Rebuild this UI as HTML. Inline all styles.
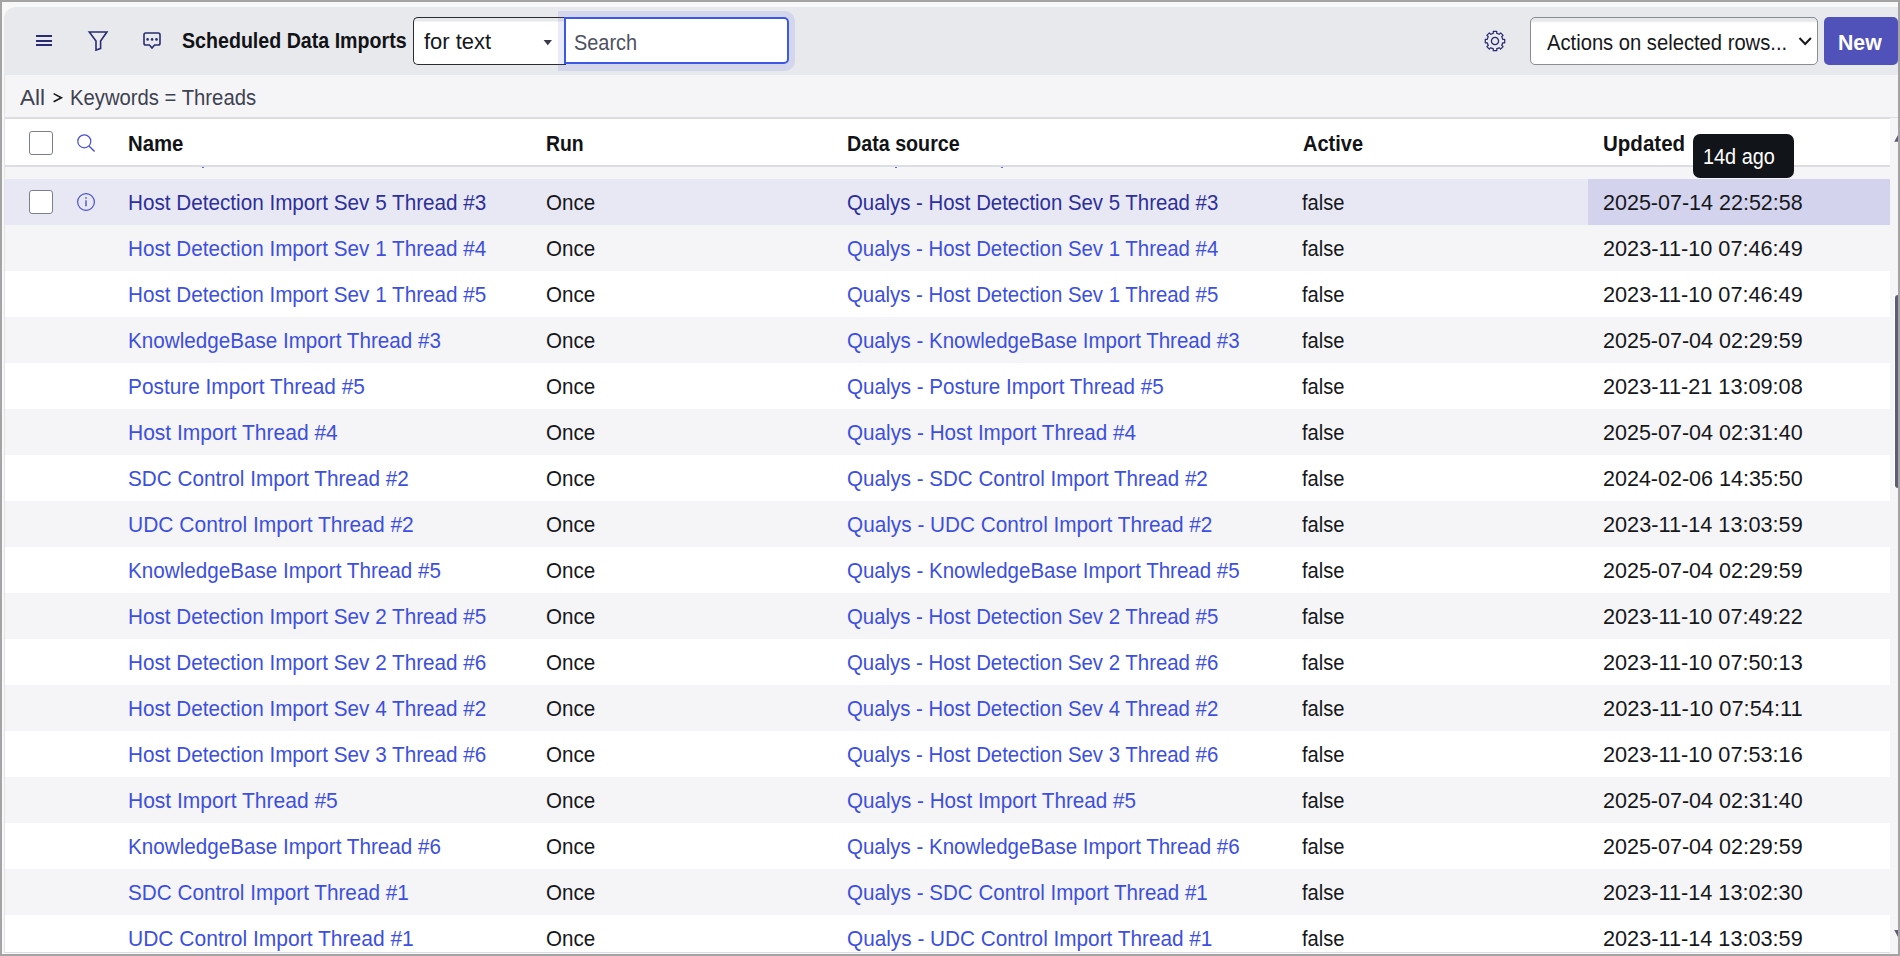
<!DOCTYPE html><html><head><meta charset="utf-8"><style>
*{box-sizing:border-box;margin:0;padding:0}
html,body{width:1900px;height:956px;overflow:hidden;background:#a4a4a4;font-family:"Liberation Sans",sans-serif}
.a{position:absolute}
.t{position:absolute;white-space:pre;line-height:30px;height:30px;transform-origin:0 0}
.cb{position:absolute;width:24px;height:24px;border:1.5px solid #7b8090;border-radius:3px;background:#fff}
</style></head><body>
<div class="a" style="left:2px;top:2px;width:1896px;height:952px;background:#f8f8f8"></div>
<div class="a" style="left:4px;top:7px;width:1894px;height:68px;background:#e8e9ed;border-top-left-radius:12px"></div>
<div class="a" style="left:4px;top:75px;width:1894px;height:44px;background:#f5f5f7;border-bottom:2px solid #dcdde3"></div>
<div class="a" style="left:4px;top:119px;width:1886px;height:48px;background:#fff;border-bottom:2px solid #dcdde3"></div>
<div class="a" style="left:4px;top:167px;width:1886px;height:785px;background:#f5f5f7"></div>
<div class="a" style="left:4px;top:179px;width:1886px;height:46px;background:#e8e8f4"></div>
<div class="a" style="left:4px;top:225px;width:1886px;height:46px;background:#f5f5f7"></div>
<div class="a" style="left:4px;top:271px;width:1886px;height:46px;background:#ffffff"></div>
<div class="a" style="left:4px;top:317px;width:1886px;height:46px;background:#f5f5f7"></div>
<div class="a" style="left:4px;top:363px;width:1886px;height:46px;background:#ffffff"></div>
<div class="a" style="left:4px;top:409px;width:1886px;height:46px;background:#f5f5f7"></div>
<div class="a" style="left:4px;top:455px;width:1886px;height:46px;background:#ffffff"></div>
<div class="a" style="left:4px;top:501px;width:1886px;height:46px;background:#f5f5f7"></div>
<div class="a" style="left:4px;top:547px;width:1886px;height:46px;background:#ffffff"></div>
<div class="a" style="left:4px;top:593px;width:1886px;height:46px;background:#f5f5f7"></div>
<div class="a" style="left:4px;top:639px;width:1886px;height:46px;background:#ffffff"></div>
<div class="a" style="left:4px;top:685px;width:1886px;height:46px;background:#f5f5f7"></div>
<div class="a" style="left:4px;top:731px;width:1886px;height:46px;background:#ffffff"></div>
<div class="a" style="left:4px;top:777px;width:1886px;height:46px;background:#f5f5f7"></div>
<div class="a" style="left:4px;top:823px;width:1886px;height:46px;background:#ffffff"></div>
<div class="a" style="left:4px;top:869px;width:1886px;height:46px;background:#f5f5f7"></div>
<div class="a" style="left:4px;top:915px;width:1886px;height:37px;background:#ffffff"></div>
<div class="a" style="left:1588px;top:179px;width:302px;height:46px;background:#d3d3ee"></div>
<div class="a" style="left:4px;top:75px;width:1px;height:877px;background:#e4e4e8"></div>
<div class="a" style="left:4px;top:952px;width:1894px;height:1px;background:#dcdce6"></div>
<div class="a" style="left:202px;top:167px;width:2px;height:1px;background:#5a6ae6"></div>
<div class="a" style="left:895px;top:167px;width:2px;height:1px;background:#5a6ae6"></div>
<div class="a" style="left:1001px;top:167px;width:2px;height:1px;background:#5a6ae6"></div>
<div class="a" style="left:1890px;top:118px;width:8px;height:836px;background:#f5f5f7"></div>
<svg class="a" style="left:1890px;top:120px" width="8" height="830" viewBox="1890 120 8 830"><path d="M1898 135 L1894.2 141.7 L1898 141.7 Z" fill="#5e5d77"/><path d="M1894.2 930 L1898 930 L1898 937 Z" fill="#5e5d77"/></svg>
<div class="a" style="left:1894px;top:295px;width:1px;height:193px;background:#fff"></div>
<div class="a" style="left:1895px;top:295px;width:3px;height:193px;background:#5e5d77;border-radius:3px 0 0 3px"></div>
<svg class="a" style="left:50px;top:90px" width="16" height="16" viewBox="50 90 16 16"><path d="M53.6 93.6 L61.4 97.7 L53.6 101.8" fill="none" stroke="#16171a" stroke-width="1.6" stroke-linejoin="miter"/></svg>
<div class="a" style="left:36px;top:35.1px;width:16px;height:1.8px;background:#2a2b72"></div>
<div class="a" style="left:36px;top:40.1px;width:16px;height:1.8px;background:#2a2b72"></div>
<div class="a" style="left:36px;top:44.1px;width:16px;height:1.8px;background:#2a2b72"></div>
<svg class="a" style="left:84px;top:27px" width="28" height="28" viewBox="84 27 28 28"><path d="M89.3 32 H106.9 L100.6 41 V48.4 L96 50 V41 Z" fill="none" stroke="#2a2b72" stroke-width="1.6" stroke-linejoin="miter"/></svg>
<svg class="a" style="left:140px;top:28px" width="24" height="24" viewBox="140 28 24 24"><path d="M145.8 33 H158.2 Q160 33 160 34.8 V43.2 Q160 45 158.2 45 H154.6 L152 48 L149.4 45 H145.8 Q144 45 144 43.2 V34.8 Q144 33 145.8 33 Z" fill="none" stroke="#2a2b72" stroke-width="1.6"/><circle cx="147.6" cy="39.4" r="1.3" fill="#2a2b72"/><circle cx="152.1" cy="39.4" r="1.3" fill="#2a2b72"/><circle cx="156.5" cy="39.4" r="1.3" fill="#2a2b72"/></svg>
<div class="a" style="left:413px;top:17px;width:153px;height:47.5px;background:linear-gradient(#e7e8e9 0,#e7e8e9 3px,#fff 4px);border:1px solid #2b2b30;border-right:none;border-radius:5px 0 0 5px"></div>
<svg class="a" style="left:540px;top:36px" width="16" height="12" viewBox="0 0 16 12"><path d="M3.6 4 L12 4 L7.8 9.2 Z" fill="#3a3b4a"/></svg>
<div class="a" style="left:558px;top:11px;width:237px;height:60px;background:rgba(70,90,220,0.12);border-radius:0 10px 10px 0"></div>
<div class="a" style="left:564px;top:17px;width:225px;height:47px;background:#fff;border:2px solid #3b58e6;border-radius:0 5px 5px 0"></div>
<svg class="a" style="left:1479.5px;top:25.5px" width="30" height="30" viewBox="-15 -15 30 30"><path d="M-1.75 -7.70 L-1.75 -9.70 L1.75 -9.70 L1.75 -7.70 A7.90 7.90 0 0 1 4.21 -6.68 L5.62 -8.10 L8.10 -5.62 L6.68 -4.21 A7.90 7.90 0 0 1 7.70 -1.75 L9.70 -1.75 L9.70 1.75 L7.70 1.75 A7.90 7.90 0 0 1 6.68 4.21 L8.10 5.62 L5.62 8.10 L4.21 6.68 A7.90 7.90 0 0 1 1.75 7.70 L1.75 9.70 L-1.75 9.70 L-1.75 7.70 A7.90 7.90 0 0 1 -4.21 6.68 L-5.62 8.10 L-8.10 5.62 L-6.68 4.21 A7.90 7.90 0 0 1 -7.70 1.75 L-9.70 1.75 L-9.70 -1.75 L-7.70 -1.75 A7.90 7.90 0 0 1 -6.68 -4.21 L-8.10 -5.62 L-5.62 -8.10 L-4.21 -6.68 A7.90 7.90 0 0 1 -1.75 -7.70 Z" fill="none" stroke="#2a2b72" stroke-width="1.25" stroke-linejoin="round"/><circle r="3.6" fill="none" stroke="#2a2b72" stroke-width="1.3"/></svg>
<div class="a" style="left:1530px;top:17px;width:288px;height:48px;background:linear-gradient(#e7e8e9 0,#e7e8e9 3px,#fff 5px);border:1px solid #8a8b93;border-radius:5px"></div>
<svg class="a" style="left:1796px;top:33px" width="18" height="16" viewBox="0 0 18 16"><path d="M3.5 5 L9.2 11 L14.9 5" fill="none" stroke="#16171a" stroke-width="2"/></svg>
<div class="a" style="left:1824px;top:17px;width:74px;height:48px;background:#5052b9;border-radius:5px"></div>
<div class="cb" style="left:29px;top:131px"></div>
<svg class="a" style="left:72px;top:130px" width="26" height="26" viewBox="72 130 26 26"><circle cx="84.3" cy="141.3" r="6.5" fill="none" stroke="#4a50d4" stroke-width="1.25"/><path d="M89 146 L94.6 151.6" stroke="#4a50d4" stroke-width="1.35" stroke-linecap="butt"/></svg>
<div class="cb" style="left:29px;top:190px"></div>
<svg class="a" style="left:74px;top:190px" width="24" height="24" viewBox="0 0 24 24"><circle cx="12" cy="12" r="8.4" fill="none" stroke="#4a50d4" stroke-width="1.2"/><rect x="11.3" y="10.3" width="1.4" height="6" fill="#4a50d4"/><rect x="11.3" y="7.2" width="1.4" height="1.6" fill="#4a50d4"/></svg>
<div class="a" style="left:1693px;top:134px;width:101px;height:44px;background:#111418;border-radius:7px"></div>
<div class="t" style="left:182.20px;top:26.3px;font-size:22px;font-weight:bold;color:#121316;transform:scaleX(0.8919)">Scheduled Data Imports</div>
<div class="t" style="left:423.80px;top:26.6px;font-size:22px;color:#16171a;transform:scaleX(0.9980)">for text</div>
<div class="t" style="left:574.29px;top:27.6px;font-size:22px;color:#4d5160;transform:scaleX(0.9056)">Search</div>
<div class="t" style="left:1547.20px;top:27.6px;font-size:22px;color:#16171a;transform:scaleX(0.9176)">Actions on selected rows...</div>
<div class="t" style="left:1838.43px;top:27.9px;font-size:22px;font-weight:bold;color:#ffffff;transform:scaleX(0.9662)">New</div>
<div class="t" style="left:19.90px;top:83.0px;font-size:22px;color:#3d4150;transform:scaleX(1.0229)">All</div>
<div class="t" style="left:69.88px;top:83.0px;font-size:22px;color:#3d4150;transform:scaleX(0.9212)">Keywords = Threads</div>
<div class="t" style="left:127.97px;top:129.0px;font-size:22px;font-weight:bold;color:#121316;transform:scaleX(0.9253)">Name</div>
<div class="t" style="left:545.92px;top:129.0px;font-size:22px;font-weight:bold;color:#121316;transform:scaleX(0.8808)">Run</div>
<div class="t" style="left:847.01px;top:129.0px;font-size:22px;font-weight:bold;color:#121316;transform:scaleX(0.8949)">Data source</div>
<div class="t" style="left:1302.50px;top:129.0px;font-size:22px;font-weight:bold;color:#121316;transform:scaleX(0.9089)">Active</div>
<div class="t" style="left:1603.07px;top:129.0px;font-size:22px;font-weight:bold;color:#121316;transform:scaleX(0.9327)">Updated</div>
<div class="t" style="left:1703.10px;top:141.7px;font-size:22px;color:#ffffff;transform:scaleX(0.9031)">14d ago</div>
<div class="t" style="left:127.86px;top:188.0px;font-size:22px;color:#2d2f9c;transform:scaleX(0.9401)">Host Detection Import Sev 5 Thread #3</div>
<div class="t" style="left:545.57px;top:188.0px;font-size:22px;color:#16171a;transform:scaleX(0.9348)">Once</div>
<div class="t" style="left:847.27px;top:188.0px;font-size:22px;color:#2d2f9c;transform:scaleX(0.9266)">Qualys - Host Detection Sev 5 Thread #3</div>
<div class="t" style="left:1302.10px;top:188.0px;font-size:22px;color:#16171a;transform:scaleX(0.9149)">false</div>
<div class="t" style="left:1603.02px;top:188.0px;font-size:22px;color:#16171a;transform:scaleX(0.9776)">2025-07-14 22:52:58</div>
<div class="t" style="left:127.86px;top:234.0px;font-size:22px;color:#3d4fe0;transform:scaleX(0.9401)">Host Detection Import Sev 1 Thread #4</div>
<div class="t" style="left:545.57px;top:234.0px;font-size:22px;color:#16171a;transform:scaleX(0.9348)">Once</div>
<div class="t" style="left:847.27px;top:234.0px;font-size:22px;color:#3d4fe0;transform:scaleX(0.9266)">Qualys - Host Detection Sev 1 Thread #4</div>
<div class="t" style="left:1302.10px;top:234.0px;font-size:22px;color:#16171a;transform:scaleX(0.9149)">false</div>
<div class="t" style="left:1603.01px;top:234.0px;font-size:22px;color:#16171a;transform:scaleX(0.9855)">2023-11-10 07:46:49</div>
<div class="t" style="left:127.86px;top:280.0px;font-size:22px;color:#3d4fe0;transform:scaleX(0.9401)">Host Detection Import Sev 1 Thread #5</div>
<div class="t" style="left:545.57px;top:280.0px;font-size:22px;color:#16171a;transform:scaleX(0.9348)">Once</div>
<div class="t" style="left:847.27px;top:280.0px;font-size:22px;color:#3d4fe0;transform:scaleX(0.9266)">Qualys - Host Detection Sev 1 Thread #5</div>
<div class="t" style="left:1302.10px;top:280.0px;font-size:22px;color:#16171a;transform:scaleX(0.9149)">false</div>
<div class="t" style="left:1603.01px;top:280.0px;font-size:22px;color:#16171a;transform:scaleX(0.9855)">2023-11-10 07:46:49</div>
<div class="t" style="left:127.86px;top:326.0px;font-size:22px;color:#3d4fe0;transform:scaleX(0.9383)">KnowledgeBase Import Thread #3</div>
<div class="t" style="left:545.57px;top:326.0px;font-size:22px;color:#16171a;transform:scaleX(0.9348)">Once</div>
<div class="t" style="left:847.27px;top:326.0px;font-size:22px;color:#3d4fe0;transform:scaleX(0.9314)">Qualys - KnowledgeBase Import Thread #3</div>
<div class="t" style="left:1302.10px;top:326.0px;font-size:22px;color:#16171a;transform:scaleX(0.9149)">false</div>
<div class="t" style="left:1603.02px;top:326.0px;font-size:22px;color:#16171a;transform:scaleX(0.9776)">2025-07-04 02:29:59</div>
<div class="t" style="left:127.85px;top:372.0px;font-size:22px;color:#3d4fe0;transform:scaleX(0.9465)">Posture Import Thread #5</div>
<div class="t" style="left:545.57px;top:372.0px;font-size:22px;color:#16171a;transform:scaleX(0.9348)">Once</div>
<div class="t" style="left:847.26px;top:372.0px;font-size:22px;color:#3d4fe0;transform:scaleX(0.9358)">Qualys - Posture Import Thread #5</div>
<div class="t" style="left:1302.10px;top:372.0px;font-size:22px;color:#16171a;transform:scaleX(0.9149)">false</div>
<div class="t" style="left:1603.01px;top:372.0px;font-size:22px;color:#16171a;transform:scaleX(0.9855)">2023-11-21 13:09:08</div>
<div class="t" style="left:127.85px;top:418.0px;font-size:22px;color:#3d4fe0;transform:scaleX(0.9549)">Host Import Thread #4</div>
<div class="t" style="left:545.57px;top:418.0px;font-size:22px;color:#16171a;transform:scaleX(0.9348)">Once</div>
<div class="t" style="left:847.26px;top:418.0px;font-size:22px;color:#3d4fe0;transform:scaleX(0.9391)">Qualys - Host Import Thread #4</div>
<div class="t" style="left:1302.10px;top:418.0px;font-size:22px;color:#16171a;transform:scaleX(0.9149)">false</div>
<div class="t" style="left:1603.02px;top:418.0px;font-size:22px;color:#16171a;transform:scaleX(0.9776)">2025-07-04 02:31:40</div>
<div class="t" style="left:128.26px;top:464.0px;font-size:22px;color:#3d4fe0;transform:scaleX(0.9424)">SDC Control Import Thread #2</div>
<div class="t" style="left:545.57px;top:464.0px;font-size:22px;color:#16171a;transform:scaleX(0.9348)">Once</div>
<div class="t" style="left:847.27px;top:464.0px;font-size:22px;color:#3d4fe0;transform:scaleX(0.9348)">Qualys - SDC Control Import Thread #2</div>
<div class="t" style="left:1302.10px;top:464.0px;font-size:22px;color:#16171a;transform:scaleX(0.9149)">false</div>
<div class="t" style="left:1603.02px;top:464.0px;font-size:22px;color:#16171a;transform:scaleX(0.9776)">2024-02-06 14:35:50</div>
<div class="t" style="left:127.84px;top:510.0px;font-size:22px;color:#3d4fe0;transform:scaleX(0.9553)">UDC Control Import Thread #2</div>
<div class="t" style="left:545.57px;top:510.0px;font-size:22px;color:#16171a;transform:scaleX(0.9348)">Once</div>
<div class="t" style="left:847.26px;top:510.0px;font-size:22px;color:#3d4fe0;transform:scaleX(0.9437)">Qualys - UDC Control Import Thread #2</div>
<div class="t" style="left:1302.10px;top:510.0px;font-size:22px;color:#16171a;transform:scaleX(0.9149)">false</div>
<div class="t" style="left:1603.01px;top:510.0px;font-size:22px;color:#16171a;transform:scaleX(0.9855)">2023-11-14 13:03:59</div>
<div class="t" style="left:127.86px;top:556.0px;font-size:22px;color:#3d4fe0;transform:scaleX(0.9383)">KnowledgeBase Import Thread #5</div>
<div class="t" style="left:545.57px;top:556.0px;font-size:22px;color:#16171a;transform:scaleX(0.9348)">Once</div>
<div class="t" style="left:847.27px;top:556.0px;font-size:22px;color:#3d4fe0;transform:scaleX(0.9314)">Qualys - KnowledgeBase Import Thread #5</div>
<div class="t" style="left:1302.10px;top:556.0px;font-size:22px;color:#16171a;transform:scaleX(0.9149)">false</div>
<div class="t" style="left:1603.02px;top:556.0px;font-size:22px;color:#16171a;transform:scaleX(0.9776)">2025-07-04 02:29:59</div>
<div class="t" style="left:127.86px;top:602.0px;font-size:22px;color:#3d4fe0;transform:scaleX(0.9401)">Host Detection Import Sev 2 Thread #5</div>
<div class="t" style="left:545.57px;top:602.0px;font-size:22px;color:#16171a;transform:scaleX(0.9348)">Once</div>
<div class="t" style="left:847.27px;top:602.0px;font-size:22px;color:#3d4fe0;transform:scaleX(0.9266)">Qualys - Host Detection Sev 2 Thread #5</div>
<div class="t" style="left:1302.10px;top:602.0px;font-size:22px;color:#16171a;transform:scaleX(0.9149)">false</div>
<div class="t" style="left:1603.01px;top:602.0px;font-size:22px;color:#16171a;transform:scaleX(0.9855)">2023-11-10 07:49:22</div>
<div class="t" style="left:127.86px;top:648.0px;font-size:22px;color:#3d4fe0;transform:scaleX(0.9401)">Host Detection Import Sev 2 Thread #6</div>
<div class="t" style="left:545.57px;top:648.0px;font-size:22px;color:#16171a;transform:scaleX(0.9348)">Once</div>
<div class="t" style="left:847.27px;top:648.0px;font-size:22px;color:#3d4fe0;transform:scaleX(0.9266)">Qualys - Host Detection Sev 2 Thread #6</div>
<div class="t" style="left:1302.10px;top:648.0px;font-size:22px;color:#16171a;transform:scaleX(0.9149)">false</div>
<div class="t" style="left:1603.01px;top:648.0px;font-size:22px;color:#16171a;transform:scaleX(0.9855)">2023-11-10 07:50:13</div>
<div class="t" style="left:127.86px;top:694.0px;font-size:22px;color:#3d4fe0;transform:scaleX(0.9401)">Host Detection Import Sev 4 Thread #2</div>
<div class="t" style="left:545.57px;top:694.0px;font-size:22px;color:#16171a;transform:scaleX(0.9348)">Once</div>
<div class="t" style="left:847.27px;top:694.0px;font-size:22px;color:#3d4fe0;transform:scaleX(0.9266)">Qualys - Host Detection Sev 4 Thread #2</div>
<div class="t" style="left:1302.10px;top:694.0px;font-size:22px;color:#16171a;transform:scaleX(0.9149)">false</div>
<div class="t" style="left:1603.01px;top:694.0px;font-size:22px;color:#16171a;transform:scaleX(0.9936)">2023-11-10 07:54:11</div>
<div class="t" style="left:127.86px;top:740.0px;font-size:22px;color:#3d4fe0;transform:scaleX(0.9401)">Host Detection Import Sev 3 Thread #6</div>
<div class="t" style="left:545.57px;top:740.0px;font-size:22px;color:#16171a;transform:scaleX(0.9348)">Once</div>
<div class="t" style="left:847.27px;top:740.0px;font-size:22px;color:#3d4fe0;transform:scaleX(0.9266)">Qualys - Host Detection Sev 3 Thread #6</div>
<div class="t" style="left:1302.10px;top:740.0px;font-size:22px;color:#16171a;transform:scaleX(0.9149)">false</div>
<div class="t" style="left:1603.01px;top:740.0px;font-size:22px;color:#16171a;transform:scaleX(0.9855)">2023-11-10 07:53:16</div>
<div class="t" style="left:127.85px;top:786.0px;font-size:22px;color:#3d4fe0;transform:scaleX(0.9549)">Host Import Thread #5</div>
<div class="t" style="left:545.57px;top:786.0px;font-size:22px;color:#16171a;transform:scaleX(0.9348)">Once</div>
<div class="t" style="left:847.26px;top:786.0px;font-size:22px;color:#3d4fe0;transform:scaleX(0.9391)">Qualys - Host Import Thread #5</div>
<div class="t" style="left:1302.10px;top:786.0px;font-size:22px;color:#16171a;transform:scaleX(0.9149)">false</div>
<div class="t" style="left:1603.02px;top:786.0px;font-size:22px;color:#16171a;transform:scaleX(0.9776)">2025-07-04 02:31:40</div>
<div class="t" style="left:127.86px;top:832.0px;font-size:22px;color:#3d4fe0;transform:scaleX(0.9383)">KnowledgeBase Import Thread #6</div>
<div class="t" style="left:545.57px;top:832.0px;font-size:22px;color:#16171a;transform:scaleX(0.9348)">Once</div>
<div class="t" style="left:847.27px;top:832.0px;font-size:22px;color:#3d4fe0;transform:scaleX(0.9314)">Qualys - KnowledgeBase Import Thread #6</div>
<div class="t" style="left:1302.10px;top:832.0px;font-size:22px;color:#16171a;transform:scaleX(0.9149)">false</div>
<div class="t" style="left:1603.02px;top:832.0px;font-size:22px;color:#16171a;transform:scaleX(0.9776)">2025-07-04 02:29:59</div>
<div class="t" style="left:128.26px;top:878.0px;font-size:22px;color:#3d4fe0;transform:scaleX(0.9424)">SDC Control Import Thread #1</div>
<div class="t" style="left:545.57px;top:878.0px;font-size:22px;color:#16171a;transform:scaleX(0.9348)">Once</div>
<div class="t" style="left:847.27px;top:878.0px;font-size:22px;color:#3d4fe0;transform:scaleX(0.9348)">Qualys - SDC Control Import Thread #1</div>
<div class="t" style="left:1302.10px;top:878.0px;font-size:22px;color:#16171a;transform:scaleX(0.9149)">false</div>
<div class="t" style="left:1603.01px;top:878.0px;font-size:22px;color:#16171a;transform:scaleX(0.9855)">2023-11-14 13:02:30</div>
<div class="t" style="left:127.84px;top:924.0px;font-size:22px;color:#3d4fe0;transform:scaleX(0.9553)">UDC Control Import Thread #1</div>
<div class="t" style="left:545.57px;top:924.0px;font-size:22px;color:#16171a;transform:scaleX(0.9348)">Once</div>
<div class="t" style="left:847.26px;top:924.0px;font-size:22px;color:#3d4fe0;transform:scaleX(0.9437)">Qualys - UDC Control Import Thread #1</div>
<div class="t" style="left:1302.10px;top:924.0px;font-size:22px;color:#16171a;transform:scaleX(0.9149)">false</div>
<div class="t" style="left:1603.01px;top:924.0px;font-size:22px;color:#16171a;transform:scaleX(0.9855)">2023-11-14 13:03:59</div>
</body></html>
